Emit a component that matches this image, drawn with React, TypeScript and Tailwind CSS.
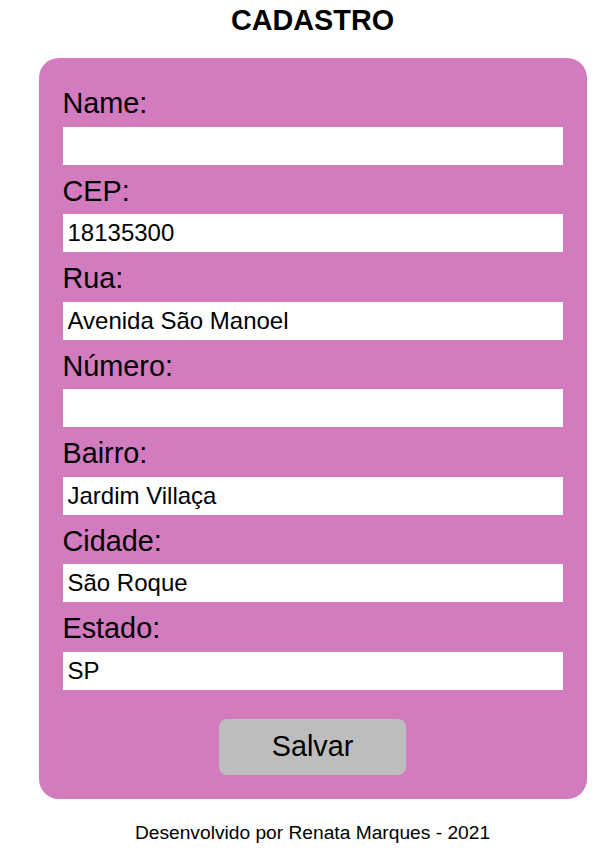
import React from "react";

const fields = [
  { label: "Name:", value: "" },
  { label: "CEP:", value: "18135300" },
  { label: "Rua:", value: "Avenida São Manoel" },
  { label: "Número:", value: "" },
  { label: "Bairro:", value: "Jardim Villaça" },
  { label: "Cidade:", value: "São Roque" },
  { label: "Estado:", value: "SP" },
];

const App = () => {
  return (
    <div className="min-h-screen w-full bg-white pl-[10px] pt-[4px] text-black font-['Liberation_Sans',Arial,sans-serif]">
      <h1 className="text-center text-[28.8px] font-bold leading-[33px]">CADASTRO</h1>
      <form
        className="mx-auto mt-[21px] w-[548px] rounded-[20px] bg-[#d27bbf] px-[24px] pt-[29px] pb-[24px]"
        onSubmit={(e) => e.preventDefault()}
      >
        {fields.map((f, i) => (
          <div key={f.label} className={i === 0 ? "" : "mt-[10px]"}>
            <label className="block text-[28.8px] leading-[32.5px]">{f.label}</label>
            <input
              type="text"
              defaultValue={f.value}
              className="mt-[7px] block h-[38px] w-full border-0 bg-white pl-[5px] text-[24px] text-black outline-none"
            />
          </div>
        ))}
        <div className="mt-[29px] flex justify-center">
          <button
            type="submit"
            className="h-[56px] w-[187px] rounded-[8px] bg-[#bdbdbd] text-[28.8px] text-black"
          >
            Salvar
          </button>
        </div>
      </form>
      <p className="mt-[23px] text-center text-[19.2px] leading-[22px]">
        Desenvolvido por Renata Marques - 2021
      </p>
    </div>
  );
};

export default App;
